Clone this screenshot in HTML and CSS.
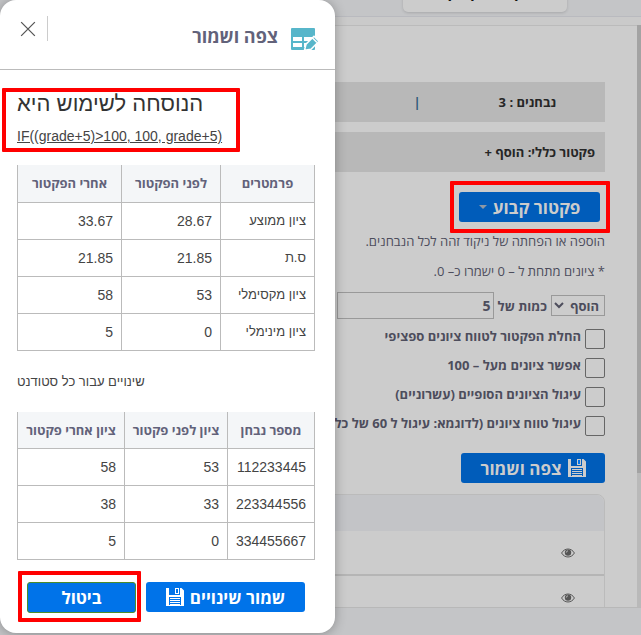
FILE: index.html
```html
<!DOCTYPE html>
<html lang="he" dir="rtl">
<head>
    <meta charset="UTF-8">
    <meta name="viewport" content="width=device-width, initial-scale=1.0">
    <title>פקטור</title>
    <link rel="stylesheet" href="styles.css">
</head>
<body>

<svg class="sprite" aria-hidden="true">
    <symbol id="icon-save" viewBox="0 0 18 18">
        <path fill="currentColor" fill-rule="evenodd" d="M0 0h3v7h11V0h1.5L18 2.500V18H0zM3 9v8h12V9z"/>
        <path fill="currentColor" d="M9 0h4v6H9zM4 10h10v1H4zM4 12h10v1H4zM4 14h10v1H4zM4 16h10v1H4z"/>
        <path class="save-slot" d="M10 1h2v4h-2z"/>
    </symbol>
    <symbol id="icon-eye" viewBox="0 0 14 10">
        <path fill="none" stroke="currentColor" d="M.6 5C3.500-.3 10.500-.3 13.400 5 10.500 10.300 3.500 10.300.6 5z"/>
        <circle cx="7" cy="4.600" r="3.200" fill="currentColor"/>
        <path fill="none" stroke="#ccc" stroke-width=".8" d="M5.300 4.600Q5.300 3 7 2.800"/>
    </symbol>
</svg>

<header class="top-bar">
    <span class="tab">בדיקה ומתן פקטור</span>
</header>

<main class="panel">
    <div class="content">
        <div class="info-bar summary"><span>נבחנים : 3</span><span class="divider">|</span></div>
        <div class="info-bar">פקטור כללי: הוסף +</div>

        <div class="factor-type marked">
            <button type="button" class="btn btn-factor">פקטור קבוע <span class="caret"></span></button>
        </div>
        <p class="hint">הוספה או הפחתה של ניקוד זהה לכל הנבחנים.</p>
        <p class="hint">* ציונים מתחת ל – 0 ישמרו כ– 0.</p>

        <div class="amount">
            <select id="action" aria-label="פעולה">
                <option>הוסף</option>
                <option>הפחת</option>
            </select>
            <label for="amount">כמות של</label>
            <input type="text" id="amount" value="5">
        </div>

        <div class="options">
            <label><input type="checkbox"><span>החלת הפקטור לטווח ציונים ספציפי</span></label>
            <label><input type="checkbox"><span>אפשר ציונים מעל – 100</span></label>
            <label><input type="checkbox"><span>עיגול הציונים הסופיים (עשרוניים)</span></label>
            <label><input type="checkbox"><span>עיגול טווח ציונים (לדוגמא: עיגול ל 60 של כל</span></label>
        </div>

        <button type="button" class="btn btn-preview"><svg class="icon-save"><use href="#icon-save"/></svg>צפה ושמור</button>

        <div class="examinees">
            <div class="examinees-head"></div>
            <div class="examinee"><svg class="icon-eye"><use href="#icon-eye"/></svg></div>
            <div class="examinee"><svg class="icon-eye"><use href="#icon-eye"/></svg></div>
        </div>
    </div>
    <div class="scroll-track"><div class="scroll-thumb"></div></div>
</main>

<section class="dialog" role="dialog" aria-labelledby="dialog-title">
    <div class="dialog-head">
        <svg class="icon-table" viewBox="0 0 28 24">
            <path fill="#57b6ca" fill-rule="evenodd" d="M1 1h22a1 1 0 0 1 1 1v20a1 1 0 0 1-1 1H1a1 1 0 0 1-1-1V2a1 1 0 0 1 1-1zM2 10v4h9v-4zM13 10v4h9v-4zM2 16v4h9v-4zM13 16v4h9v-4z"/>
            <path fill="#57b6ca" stroke="#fff" stroke-width="1.500" d="M13.500 23.200l1.500-6 8-8 5 5-8 8z"/>
            <path stroke="#fff" stroke-width="1.500" d="M21 10.500l5 5"/>
        </svg>
        <h2 id="dialog-title">צפה ושמור</h2>
        <button type="button" class="close" aria-label="סגור">
            <svg viewBox="0 0 14 14"><path stroke="#555" stroke-width="1.100" d="M1 1l12 12M13 1L1 13"/></svg>
        </button>
    </div>

    <div class="dialog-body">
        <div class="formula marked">
            <h3>הנוסחה לשימוש היא</h3>
            <p dir="ltr">IF((grade+5)&gt;100, 100, grade+5)</p>
        </div>

        <table class="stats">
            <thead>
                <tr><th>פרמטרים</th><th>לפני הפקטור</th><th>אחרי הפקטור</th></tr>
            </thead>
            <tbody>
                <tr><td>ציון ממוצע</td><td>28.67</td><td>33.67</td></tr>
                <tr><td>ס.ת</td><td>21.85</td><td>21.85</td></tr>
                <tr><td>ציון מקסימלי</td><td>53</td><td>58</td></tr>
                <tr><td>ציון מינימלי</td><td>0</td><td>5</td></tr>
            </tbody>
        </table>

        <p class="changes-title">שינויים עבור כל סטודנט</p>

        <table class="changes">
            <thead>
                <tr><th>מספר נבחן</th><th>ציון לפני פקטור</th><th>ציון אחרי פקטור</th></tr>
            </thead>
            <tbody>
                <tr><td>112233445</td><td>53</td><td>58</td></tr>
                <tr><td>223344556</td><td>33</td><td>38</td></tr>
                <tr><td>334455667</td><td>0</td><td>5</td></tr>
            </tbody>
        </table>

        <div class="actions">
            <button type="button" class="btn btn-save">שמור שינויים<svg class="icon-save"><use href="#icon-save"/></svg></button>
            <div class="cancel marked">
                <button type="button" class="btn btn-cancel">ביטול</button>
            </div>
        </div>
    </div>
</section>

</body>
</html>
```
FILE: styles.css
```css
* {
    box-sizing: border-box;
}
body {
    margin: 0;
    height: 100vh;
    display: flex;
    flex-direction: column;
    overflow: hidden;
    background: #c4c5c7;
    color: #4d4d5c;
    font-family: "Open Sans", "Liberation Sans", sans-serif;
    font-size: 13px;
}
h2, h3, p {
    margin: 0;
}
button, input, select {
    font-family: inherit;
}
.sprite {
    display: none;
}

/* page */
.top-bar {
    flex: none;
    height: 17px;
    display: flex;
    align-items: flex-end;
    padding: 0 74px 4px;
    border-bottom: 1px solid #b9babf;
}
.tab {
    width: 164px;
    height: 40px;
    padding-top: 9px;
    border-radius: 5px;
    background: #ccc;
    box-shadow: 0 1px 3px rgba(0, 0, 0, 0.15);
    color: #111;
    font-weight: bold;
    font-size: 15px;
    line-height: 20px;
    text-align: center;
}
.panel {
    flex: 1;
    min-height: 0;
    display: flex;
    margin-bottom: 27px;
    border-top: 8px solid #cacaca;
    border-bottom: 1px solid #b8b8b8;
    background: #ccc;
}
.content {
    order: 1;
    flex: 1;
    min-width: 0;
    overflow: hidden;
    padding: 56px 32px 0 0;
    border-top: 1px solid #bbb;
}
.scroll-track {
    width: 4px;
    background: #b9b9b9;
}
.scroll-thumb {
    height: 77%;
    background: #a3a3a3;
}
.info-bar {
    height: 40px;
    margin-bottom: 10px;
    padding: 0 10px;
    background: #b8b8b8;
    color: #262626;
    font-weight: bold;
    line-height: 40px;
}
.summary {
    display: flex;
    gap: 78px;
    padding: 0 49px;
}
.divider {
    color: #2f5876;
}
.btn {
    display: inline-flex;
    align-items: center;
    justify-content: center;
    gap: 6px;
    height: 30px;
    padding: 0;
    border: 0;
    border-radius: 3px;
    background: #0073e9;
    color: #fff;
    font-size: 17px;
    font-weight: bold;
    white-space: nowrap;
}
.btn-factor, .btn-preview {
    background: #005cba;
    color: #ccc;
}
.factor-type {
    width: 141px;
    margin: 20px 5px 4px 0;
}
.btn-factor {
    width: 100%;
}
.caret {
    border: 4px solid transparent;
    border-top-color: #8d98a5;
    border-bottom: 0;
}
.hint {
    line-height: 30px;
}
.amount {
    display: flex;
    align-items: center;
    gap: 4px;
    margin: 6px 0 10px;
    font-weight: bold;
    white-space: nowrap;
}
.amount select {
    width: 54px;
    height: 21px;
    padding: 0 1px 0 0;
    border: 1px solid #999;
    background: transparent;
    color: #4d4d5c;
    font-weight: bold;
    font-size: 13px;
}
.amount input {
    width: 157px;
    height: 27px;
    padding: 0 2px;
    border: 1px solid #999;
    background: transparent;
    color: #4d4d5c;
    font-weight: bold;
    font-size: 14px;
}
.options label {
    display: flex;
    gap: 4px;
    height: 29px;
    font-weight: bold;
    line-height: 14px;
    white-space: nowrap;
}
.options input {
    appearance: none;
    flex: none;
    width: 20px;
    height: 20px;
    margin: 0;
    border: 1px solid #666;
    border-radius: 2px;
}
.icon-save {
    width: 18px;
    height: 18px;
}
.save-slot {
    fill: #0073e9;
}
.btn-preview {
    width: 144px;
    margin: 8px 0 11px;
}
.examinees {
    border: 1px solid #bbb;
    border-radius: 0 8px 0 0;
}
.examinees-head {
    height: 36px;
    border-radius: 0 8px 0 0;
    background: #c3c4c7;
}
.examinee {
    height: 45px;
    display: flex;
    align-items: center;
    padding: 0 29px;
    border-bottom: 2px solid #b5b5b5;
}
.icon-eye {
    width: 14px;
    height: 10px;
    color: #555;
}

/* dialog */
.dialog {
    position: absolute;
    top: 0;
    left: 0;
    width: 335px;
    border-radius: 16px;
    background: #fff;
    box-shadow: 0 1px 12px rgba(0, 0, 0, 0.3);
    color: #444;
    font-family: "Liberation Sans", "Open Sans", sans-serif;
    font-size: 14px;
}
.dialog-head {
    display: flex;
    height: 70px;
    padding: 16px 16px 0 20px;
    border-bottom: 1px solid #bbb;
}
.icon-table {
    width: 28px;
    height: 24px;
    margin-top: 11px;
}
.dialog-head h2 {
    margin: 8px 13px 0 0;
    color: #62627a;
    font-family: "Open Sans", sans-serif;
    font-size: 18px;
    line-height: 24px;
}
.close {
    height: 25px;
    margin-right: auto;
    padding: 0 11px 0 0;
    border: 0;
    border-right: 1px solid #ccc;
    background: none;
}
.close svg {
    display: block;
    width: 16px;
    height: 16px;
}
.dialog-body {
    padding: 22px 20px 20px 17px;
}
.marked {
    position: relative;
}
.marked::after {
    content: "";
    position: absolute;
    inset: -11px -10px -11px -9px;
    border: 4px solid #f00;
    border-radius: 1px;
    pointer-events: none;
}
.formula {
    width: 208px;
    margin-right: auto;
    margin-bottom: 18px;
    text-align: left;
    white-space: nowrap;
}
.formula::after {
    inset: -4px -15px -5px;
}
.formula h3 {
    color: #333;
    font-size: 22px;
    font-weight: normal;
    line-height: 24px;
}
.formula p {
    margin-top: 10px;
    line-height: 21px;
    text-decoration: underline;
}
.dialog table {
    width: 100%;
    table-layout: fixed;
    border-collapse: collapse;
}
.dialog th, .dialog td {
    height: 37px;
    padding: 0 8px;
    border: 1px solid #bbb;
    text-align: right;
    white-space: nowrap;
}
.dialog th {
    padding: 0;
    border-top: 0;
    background: #f4f6f8;
    color: #62627a;
    font-family: "Open Sans", sans-serif;
    font-size: 13px;
    text-align: center;
}
.stats th:nth-child(1) {
    width: 94px;
}
.stats th:nth-child(2) {
    width: 99px;
}
.stats td:nth-child(1) {
    font-size: 13px;
}
.changes th:nth-child(1) {
    width: 87px;
}
.changes th:nth-child(2) {
    width: 103px;
}
.changes-title {
    margin: 21px 0 20px;
    font-size: 13px;
    line-height: 20px;
    text-align: left;
}
.actions {
    display: flex;
    gap: 10px;
    margin: 22px 10px 0;
}
.actions .btn {
    font-family: "Open Sans", sans-serif;
}
.btn-save {
    flex: 1;
}
.cancel {
    width: 109px;
}
.cancel::after {
    inset: -11px -5px -9px -9px;
}
.btn-cancel {
    width: 100%;
    height: 31px;
    border: 1px solid #4c8c2b;
}
```
